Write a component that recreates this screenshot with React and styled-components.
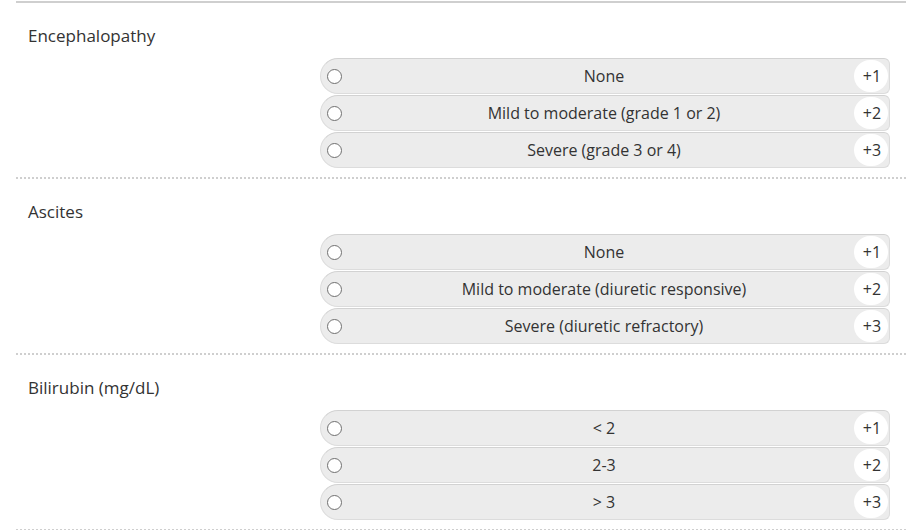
import React from "react";
import styled, { createGlobalStyle } from "styled-components";

const Global = createGlobalStyle`
  body {
    margin: 0;
    background: #fff;
    font-family: "Open Sans", "Liberation Sans", sans-serif;
    color: #333;
  }
`;

const Page = styled.div`
  width: 890px;
  margin: 1px 0 0 16px;
  border-top: 2px solid #cfcfcf;
`;

const Section = styled.section`
  padding: 22px 0 9px;
  border-bottom: 2px dotted #cfcfcf;
`;

const Label = styled.div`
  padding-left: 12px;
  font-size: 17px;
  line-height: 22px;
  margin-bottom: 11px;
`;

const Options = styled.div`
  margin-left: 304px;
  width: 570px;
  display: flex;
  flex-direction: column;
  gap: 1px;
`;

const Option = styled.label`
  display: flex;
  align-items: center;
  height: 36px;
  box-sizing: border-box;
  background: #ececec;
  border: 1px solid #dcdcdc;
  border-top-color: #d2d2d2;
  border-radius: 18px 6px 6px 18px;
  cursor: pointer;
`;

const Radio = styled.span`
  width: 13px;
  height: 13px;
  margin-left: 6px;
  border: 1.2px solid #707070;
  border-radius: 50%;
  background: #fff;
  flex: none;
`;

const Text = styled.span`
  flex: 1;
  text-align: center;
  font-size: 16px;
  padding-left: 12px;
`;

const Score = styled.span`
  flex: none;
  width: 34px;
  height: 32px;
  margin-right: 1px;
  border-radius: 16px;
  background: #fff;
  display: flex;
  align-items: center;
  justify-content: center;
  font-size: 16px;
  padding-left: 2px;
  box-sizing: border-box;
`;

const data = [
  { label: "Encephalopathy", options: ["None", "Mild to moderate (grade 1 or 2)", "Severe (grade 3 or 4)"] },
  { label: "Ascites", options: ["None", "Mild to moderate (diuretic responsive)", "Severe (diuretic refractory)"] },
  { label: "Bilirubin (mg/dL)", options: ["< 2", "2-3", "> 3"] },
];

export default function App() {
  return (
    <>
      <Global />
      <Page>
        {data.map((s) => (
          <Section key={s.label}>
            <Label>{s.label}</Label>
            <Options>
              {s.options.map((o, i) => (
                <Option key={o}>
                  <Radio />
                  <Text>{o}</Text>
                  <Score>+{i + 1}</Score>
                </Option>
              ))}
            </Options>
          </Section>
        ))}
      </Page>
    </>
  );
}
